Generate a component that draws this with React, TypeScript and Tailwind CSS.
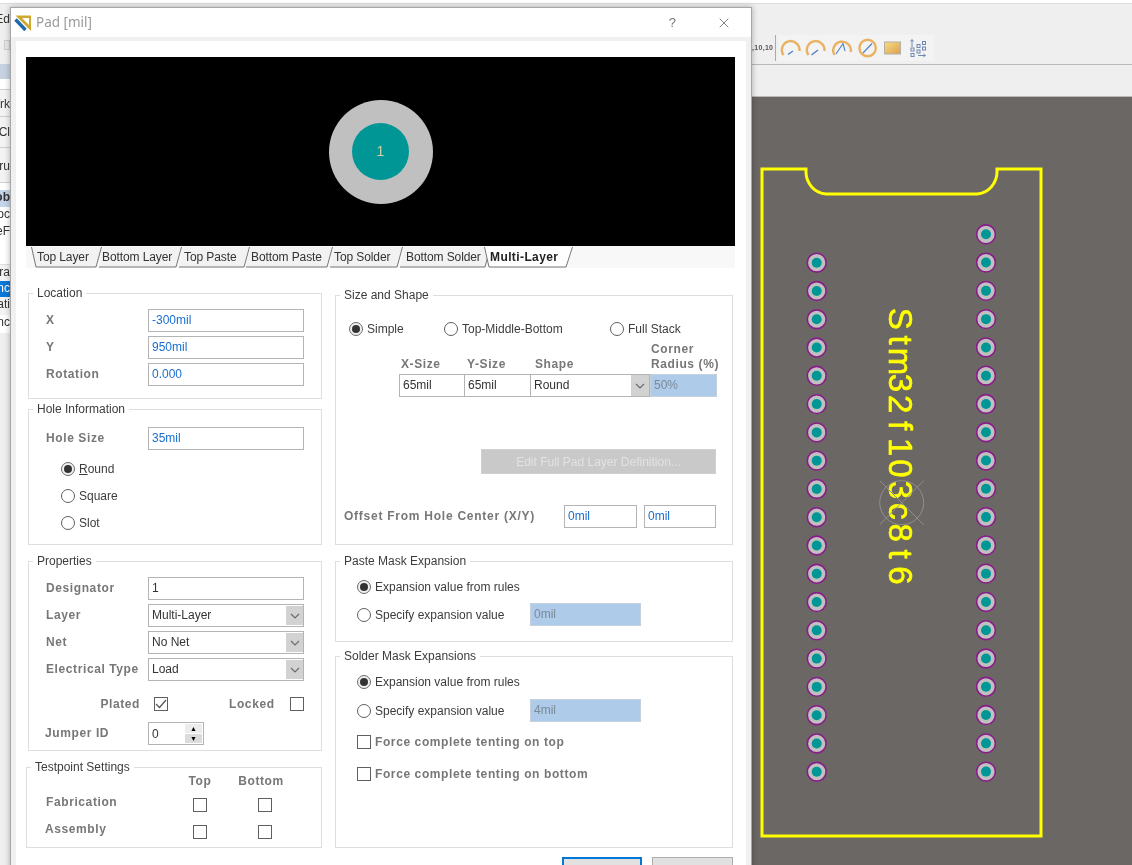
import type { ReactNode } from "react";
import { X } from "lucide-react";

const LABEL = "whitespace-nowrap text-[12px] font-bold tracking-[0.6px] text-[#777777]";
const LEFT_PADS = Array.from({ length: 19 }, (_, i) => 262.7 + i * 28.28);
const RIGHT_PADS = Array.from({ length: 20 }, (_, i) => 234.3 + i * 28.28);
const BOARD_TEXT = "Stm32f103c8t6";
const BOARD_TEXT_X = BOARD_TEXT.split("").map((_, i) => (10.7 + i * 21.4).toFixed(1)).join(" ");

const TABS = [
  { label: "Top Layer", width: 71, box: "w-[71px] pl-[6px]" },
  { label: "Bottom Layer", width: 84, box: "w-[84px] pl-[4px] -ml-[4px]" },
  { label: "Top Paste", width: 72, box: "w-[72px] pl-[6px] -ml-[4px]" },
  { label: "Bottom Paste", width: 88, box: "w-[88px] pl-[6px] -ml-[5px]" },
  { label: "Top Solder", width: 74, box: "w-[74px] pl-[5px] -ml-[4px]" },
  { label: "Bottom Solder", width: 92, box: "w-[92px] pl-[7px] -ml-[4px]" },
];

const SIDE_ROWS = [
  { text: "", box: "h-[3px] bg-white" },
  { text: "", box: "h-[9px] border-t border-[#dddddd]" },
  { text: "Ed", box: "h-[15px]" },
  { text: "", box: "h-[13px]" },
  { text: "", box: "h-[10px] ml-[4px] border border-[#cccccc] bg-[#e8e8e8]" },
  { text: "", box: "h-[14px]" },
  { text: "", box: "h-[15px] bg-[#c6d2e2]" },
  { text: "", box: "h-[11px] bg-white border-b border-[#cfcfcf]" },
  { text: "Wrk", box: "h-[27px] pt-[7px] bg-[#f3f3f3] border-b border-[#cfcfcf]" },
  { text: "Cl", box: "h-[31px] pt-[8px] bg-[#f3f3f3] border-b border-[#cfcfcf]" },
  { text: "ru", box: "h-[35px] pt-[11px] bg-[#f3f3f3] border-b border-[#cfcfcf]" },
  { text: "", box: "h-[7px] bg-white" },
  { text: "ob", box: "h-[17px] bg-[#c4d6ec] font-bold" },
  { text: "oc", box: "h-[17px] bg-white" },
  { text: "eF", box: "h-[17px] bg-white" },
  { text: "", box: "h-[24px] bg-white border-b border-[#dddddd]" },
  { text: "ora", box: "h-[16px] bg-[#f3f3f3]" },
  { text: "nc", box: "h-[16px] bg-[#0a78d7] text-white" },
  { text: "ati", box: "h-[18px] bg-[#f3f3f3]" },
  { text: "nc", box: "h-[18px] bg-white" },
];

function Group({ title, box, children }: { title: string; box: string; children: ReactNode }) {
  return (
    <div className={`relative border border-[#dedede] ${box}`}>
      <span className="absolute -top-[9px] left-[4px] whitespace-nowrap bg-white px-[4px] text-[12px] leading-[16px] text-[#3c3c3c]">
        {title}
      </span>
      {children}
    </div>
  );
}

function Field({ value, box, blue = true }: { value: string; box: string; blue?: boolean }) {
  return (
    <div
      className={`flex h-[23px] shrink-0 items-center border border-[#b4b4b4] bg-white pb-[2px] pl-[3px] text-[12px] ${box} ${
        blue ? "text-[#1a6fd0]" : "text-[#333333]"
      }`}
    >
      {value}
    </div>
  );
}

function Shaded({ value, box }: { value: string; box: string }) {
  return (
    <div className={`flex h-[23px] shrink-0 items-center border border-[#c4d0dc] bg-[#aecbe9] pb-[2px] pl-[3px] text-[12px] text-[#7b8a99] ${box}`}>
      {value}
    </div>
  );
}

function Arrow() {
  return (
    <svg width="10" height="6" viewBox="0 0 10 6" fill="none" stroke="#6a6a6a" strokeWidth="1.1">
      <path d="M1 1l4 4 4-4" />
    </svg>
  );
}

function Select({ value }: { value: string }) {
  return (
    <div className="flex h-[23px] w-[156px] shrink-0 items-center justify-between border border-[#b4b4b4] bg-white pl-[3px] text-[12px] text-[#333333]">
      <span className="pb-[2px]">{value}</span>
      <span className="flex h-[19px] w-[17px] items-center justify-center bg-[#d2d2d2]">
        <Arrow />
      </span>
    </div>
  );
}

function Radio({ label, checked = false, box = "" }: { label: string; checked?: boolean; box?: string }) {
  return (
    <div className={`flex h-[14px] shrink-0 items-center gap-[4px] whitespace-nowrap text-[12px] text-[#3c3c3c] ${box}`}>
      <span
        className={`flex h-[14px] w-[14px] shrink-0 items-center justify-center rounded-full border ${
          checked ? "border-[#6b6b6b] bg-[#f0f0f0]" : "border-[#5f5f5f] bg-white"
        }`}
      >
        {checked && <span className="h-[8px] w-[8px] rounded-full bg-[#333333]" />}
      </span>
      {label}
    </div>
  );
}

function Check({ checked = false, box = "" }: { checked?: boolean; box?: string }) {
  return (
    <span className={`flex h-[14px] w-[14px] shrink-0 items-center justify-center border border-[#5f5f5f] bg-white ${box}`}>
      {checked && (
        <svg width="12" height="10" viewBox="0 0 12 10" fill="none" stroke="#555555" strokeWidth="1.2">
          <path d="M1 5l3.5 3.5L11 1" />
        </svg>
      )}
    </span>
  );
}

function LabeledRow({ label, children, box = "" }: { label: string; children: ReactNode; box?: string }) {
  return (
    <div className={`flex h-[23px] items-center pl-[17px] ${box}`}>
      <span className={`w-[102px] shrink-0 pb-[2px] ${LABEL}`}>{label}</span>
      {children}
    </div>
  );
}

function Tab({ label, width, box, first }: { label: string; width: number; box: string; first: boolean }) {
  const fill = first ? `M0.5 1 L5 21 H${width - 6} L${width - 0.5} 1 Z` : `M5 1 L1 21 H${width - 6} L${width - 0.5} 1 Z`;
  const line = first ? `M0.5 1 L5 21 H${width - 6} L${width - 0.5} 1` : `M1 21 H${width - 6} L${width - 0.5} 1`;
  return (
    <div className={`relative flex h-[22px] shrink-0 items-center text-[12px] text-[#333333] ${box}`}>
      <svg className="absolute left-0 top-0" width={width} height="22" viewBox={`0 0 ${width} 22`} fill="none">
        <path d={fill} fill="#f2f2f2" />
        <path d={line} stroke="#777777" strokeWidth="1" />
      </svg>
      <span className="relative whitespace-nowrap tracking-[-0.1px]">{label}</span>
    </div>
  );
}

function ToolbarIcons() {
  const arc = "#e8b262";
  const needle = "#4f7fce";
  return (
    <svg width="156" height="26" viewBox="778 35 156 26" className="block bg-[#f3f3f3]" fill="none">
      <defs>
        <linearGradient id="swatch" x1="0" y1="0" x2="1" y2="1">
          <stop offset="0" stopColor="#fbdc7e" />
          <stop offset="1" stopColor="#d9a055" />
        </linearGradient>
      </defs>
      <path d="M783.5 55 A8.8 8.8 0 1 1 799.4 51" stroke={arc} strokeWidth="2.4" />
      <path d="M788 54.5 L793 51" stroke={needle} strokeWidth="1.4" />
      <path d="M808.5 55 A8.8 8.8 0 1 1 824.4 51" stroke={arc} strokeWidth="2.4" />
      <path d="M811.5 55 L818 50" stroke={needle} strokeWidth="1.4" />
      <path d="M834.5 55 A8.8 8.8 0 1 1 850.7 52" stroke={arc} strokeWidth="2.4" />
      <path d="M836 54 L843 43.5 L845 51" stroke={needle} strokeWidth="1.1" />
      <circle cx="867.6" cy="48" r="8.2" stroke={arc} strokeWidth="2.4" />
      <path d="M863 53 L872 43.5" stroke={needle} strokeWidth="1.1" />
      <rect x="884.5" y="42" width="16" height="12" fill="url(#swatch)" stroke="#b5b0a4" strokeWidth="1" />
      <g stroke="#6d88b4" strokeWidth="1">
        <path d="M912 47 V40 M910.5 41.5 L912 39.5 L913.5 41.5" />
        <path d="M918 55.5 H925 M923.5 54 L925.5 55.5 L923.5 57" />
        <rect x="911" y="48" width="3" height="3" />
        <rect x="911" y="53.5" width="3" height="3" />
        <rect x="917" y="44.5" width="3" height="3" />
        <rect x="917" y="50" width="3" height="3" />
        <rect x="922.5" y="41.5" width="3" height="3" />
        <rect x="922.5" y="47" width="3" height="3" />
      </g>
    </svg>
  );
}

function Board() {
  return (
    <svg className="block" width="1122" height="768" viewBox="10 97 1122 768" fill="none">
      <path
        d="M762 169 H806 V172 A22 22 0 0 0 826 194 H977 A22 22 0 0 0 997 172 V169 H1041 V836 H762 Z"
        stroke="#ffff00"
        strokeWidth="3"
      />
      {LEFT_PADS.map((y) => (
        <g key={y}>
          <circle cx="816.7" cy={y} r="9.4" fill="#c0c0c0" stroke="#8b1a8b" strokeWidth="1.6" />
          <circle cx="816.7" cy={y} r="5" fill="#009696" />
        </g>
      ))}
      {RIGHT_PADS.map((y) => (
        <g key={y}>
          <circle cx="986" cy={y} r="9.4" fill="#c0c0c0" stroke="#8b1a8b" strokeWidth="1.6" />
          <circle cx="986" cy={y} r="5" fill="#009696" />
        </g>
      ))}
      <text
        transform="translate(889 308) rotate(90)"
        x={BOARD_TEXT_X}
        fill="#ffff00"
        stroke="#ffff00"
        strokeWidth="0.6"
        fontFamily="'Liberation Sans', Arial, sans-serif"
        fontSize="33"
        textAnchor="middle"
      >
        {BOARD_TEXT}
      </text>
      <g stroke="#8f8f8f" strokeWidth="1">
        <circle cx="901.7" cy="502.7" r="22" />
        <path d="M879.7 480.7 L923.7 524.7 M923.7 480.7 L879.7 524.7" />
      </g>
    </svg>
  );
}

export default function App() {
  return (
    <div className="relative flex h-[865px] w-[1132px] overflow-hidden bg-[#efefef] font-['Liberation_Sans',Arial,sans-serif] blur-[0.5px]">
      {/* sliver of the side panel behind the dialog */}
      <div className="flex w-[10px] shrink-0 flex-col overflow-hidden text-[12px] leading-[15px] text-[#333333]">
        {SIDE_ROWS.map((row, i) => (
          <div key={i} className={`flex shrink-0 justify-end whitespace-nowrap ${row.box}`}>
            {row.text}
          </div>
        ))}
      </div>

      <div className="flex min-w-0 flex-1 flex-col">
        <div className="h-[3px] shrink-0 bg-white" />
        <div className="flex h-[62px] shrink-0 items-end border-y border-t-[#dddddd] border-b-[#b9b9b9] pb-[3px] pl-[742px]">
          <span className="mb-[8px] w-[23px] text-[7px] font-bold tracking-[0.3px] text-[#555555]">,10,10</span>
          <span className="h-[26px] w-px bg-[#aaaaaa]" />
          <span className="ml-[2px]">
            <ToolbarIcons />
          </span>
        </div>
        <div className="h-[32px] shrink-0 border-b border-[#b9b9b9]" />
        <div className="min-h-0 flex-1 bg-[#6b6764]">
          <Board />
        </div>
      </div>

      {/* Pad dialog */}
      <div className="absolute left-[10px] top-[7px] flex h-[870px] w-[742px] flex-col border border-[#a6a6a6] bg-[#f0f0f0] shadow-[0_0_6px_rgba(0,0,0,0.3)]">
        <div className="flex h-[29px] shrink-0 items-center bg-white pl-[3px]">
          <svg width="18" height="18" viewBox="0 0 18 18" fill="none">
            <path d="M1.5 1.5 H17 V17 Z" fill="#cfa92e" />
            <path d="M8 4 H15 V11 Z" fill="#ffffff" />
            <path d="M1.5 5.5 L11.5 16" stroke="#2268ad" strokeWidth="3.4" />
          </svg>
          <span className="ml-[4px] font-['Noto_Sans',sans-serif] text-[13.5px] text-[#9a9a9a]">Pad [mil]</span>
          <span className="ml-auto text-[13px] text-[#777777]">?</span>
          <X className="ml-[40px] mr-[19px] text-[#444444]" size={16} strokeWidth={1} />
        </div>

        <div className="mx-[5px] mt-[4px] flex-1 bg-white pl-[10px] pt-[16px]">
          <div className="flex h-[189px] w-[709px] items-center justify-center bg-black">
            <div className="flex h-[104px] w-[104px] items-center justify-center rounded-full bg-[#c0c0c0]">
              <div className="flex h-[57px] w-[57px] items-center justify-center rounded-full bg-[#009696] text-[14px] text-[#c9d3a8]">
                1
              </div>
            </div>
          </div>

          <div className="flex h-[22px] w-[709px] bg-[#f8f8f8] pl-[5px]">
            {TABS.map((tab, i) => (
              <Tab key={tab.label} {...tab} first={i === 0} />
            ))}
            <div className="relative -ml-[7px] flex h-[22px] w-[89px] shrink-0 items-center pl-[6px] text-[12px] font-bold text-[#222222]">
              <svg className="absolute left-0 top-0" width="89" height="22" viewBox="0 0 89 22">
                <path d="M0.5 1 L5 21 H82 L88.5 1" fill="#ffffff" stroke="#777777" strokeWidth="1" />
              </svg>
              <span className="relative whitespace-nowrap tracking-[0.4px]">Multi-Layer</span>
            </div>
          </div>

          <div className="mt-[25px] flex pl-[2px]">
            {/* left column */}
            <div className="w-[294px] shrink-0">
              <Group title="Location" box="h-[106px] pt-[15px]">
                <LabeledRow label="X">
                  <Field value="-300mil" box="w-[156px]" />
                </LabeledRow>
                <LabeledRow label="Y" box="mt-[4px]">
                  <Field value="950mil" box="w-[156px]" />
                </LabeledRow>
                <LabeledRow label="Rotation" box="mt-[4px]">
                  <Field value="0.000" box="w-[156px]" />
                </LabeledRow>
              </Group>

              <Group title="Hole Information" box="mt-[10px] h-[136px] pt-[17px]">
                <LabeledRow label="Hole Size">
                  <Field value="35mil" box="w-[156px]" />
                </LabeledRow>
                <div className="mt-[12px] flex flex-col gap-[13px] pl-[32px]">
                  <div className="flex h-[14px] items-center gap-[4px] text-[12px] text-[#3c3c3c]">
                    <span className="flex h-[14px] w-[14px] items-center justify-center rounded-full border border-[#6b6b6b] bg-[#f0f0f0]">
                      <span className="h-[8px] w-[8px] rounded-full bg-[#333333]" />
                    </span>
                    <span>
                      <span className="underline">R</span>ound
                    </span>
                  </div>
                  <Radio label="Square" />
                  <Radio label="Slot" />
                </div>
              </Group>

              <Group title="Properties" box="mt-[16px] h-[190px] pt-[15px]">
                <LabeledRow label="Designator">
                  <Field value="1" box="w-[156px]" blue={false} />
                </LabeledRow>
                <LabeledRow label="Layer" box="mt-[4px]">
                  <Select value="Multi-Layer" />
                </LabeledRow>
                <LabeledRow label="Net" box="mt-[4px]">
                  <Select value="No Net" />
                </LabeledRow>
                <LabeledRow label="Electrical Type" box="mt-[4px]">
                  <Select value="Load" />
                </LabeledRow>
                <div className="mt-[16px] flex h-[14px] items-center pl-[17px]">
                  <span className={`w-[94px] text-right ${LABEL}`}>Plated</span>
                  <Check checked box="ml-[14px]" />
                  <span className={`ml-[61px] w-[47px] ${LABEL}`}>Locked</span>
                  <Check box="ml-[14px]" />
                </div>
                <div className="mt-[11px] flex h-[23px] items-center pl-[16px]">
                  <span className={`w-[103px] shrink-0 pb-[2px] ${LABEL}`}>Jumper ID</span>
                  <div className="flex h-[23px] w-[56px] items-center justify-between border border-[#b4b4b4] bg-white pl-[3px] pr-[1px] text-[12px] text-[#333333]">
                    0
                    <span className="flex w-[17px] flex-col gap-[1px] text-black">
                      <span className="flex h-[9px] items-center justify-center bg-[#ececec] text-[7px] leading-none">▲</span>
                      <span className="flex h-[9px] items-center justify-center bg-[#dcdcdc] text-[7px] leading-none">▼</span>
                    </span>
                  </div>
                </div>
              </Group>

              <Group title="Testpoint Settings" box="mt-[16px] -ml-[2px] h-[81px] pt-[6px]">
                <div className="flex h-[14px] items-center pl-[166px]">
                  <span className={`flex w-[14px] justify-center ${LABEL}`}>Top</span>
                  <span className={`ml-[47px] flex w-[14px] justify-center ${LABEL}`}>Bottom</span>
                </div>
                <div className="mt-[10px] flex h-[14px] items-center pl-[19px]">
                  <span className={`w-[147px] pb-[6px] ${LABEL}`}>Fabrication</span>
                  <Check />
                  <Check box="ml-[51px]" />
                </div>
                <div className="mt-[13px] flex h-[14px] items-center pl-[18px]">
                  <span className={`w-[148px] pb-[6px] ${LABEL}`}>Assembly</span>
                  <Check />
                  <Check box="ml-[51px]" />
                </div>
              </Group>
            </div>

            {/* right column */}
            <div className="ml-[13px] mt-[2px] w-[398px] shrink-0">
              <Group title="Size and Shape" box="h-[250px] pt-[26px]">
                <div className="flex pl-[13px]">
                  <Radio label="Simple" checked box="w-[95px]" />
                  <Radio label="Top-Middle-Bottom" box="w-[166px]" />
                  <Radio label="Full Stack" />
                </div>
                <div className={`ml-[63px] mt-[6px] flex h-[30px] items-end leading-[15px] ${LABEL}`}>
                  <span className="w-[66px] pl-[2px]">X-Size</span>
                  <span className="w-[66px] pl-[2px]">Y-Size</span>
                  <span className="w-[119px] pl-[4px]">Shape</span>
                  <span className="pl-[1px]">
                    Corner
                    <br />
                    Radius (%)
                  </span>
                </div>
                <div className="ml-[63px] mt-[2px] flex h-[23px] w-[318px] text-[12px] text-[#333333]">
                  <Field value="65mil" box="w-[66px]" blue={false} />
                  <Field value="65mil" box="-ml-px w-[67px]" blue={false} />
                  <div className="-ml-px flex h-[23px] w-[120px] items-center justify-between border border-[#b4b4b4] bg-white pl-[3px]">
                    <span className="pb-[2px]">Round</span>
                    <span className="flex h-[21px] w-[18px] items-center justify-center bg-[#d2d2d2]">
                      <Arrow />
                    </span>
                  </div>
                  <Shaded value="50%" box="w-[67px]" />
                </div>
                <div className="ml-[145px] mt-[52px] flex h-[25px] w-[235px] items-center justify-center border border-[#d0d0d0] bg-[#c9c9c9] text-[12px] text-[#e2e2e2]">
                  Edit Full Pad Layer Definition...
                </div>
                <div className="ml-[8px] mt-[31px] flex h-[23px] items-center">
                  <span className={`w-[220px] shrink-0 pb-[2px] tracking-[0.75px] ${LABEL}`}>Offset From Hole Center (X/Y)</span>
                  <Field value="0mil" box="w-[73px]" />
                  <Field value="0mil" box="ml-[7px] w-[72px]" />
                </div>
              </Group>

              <Group title="Paste Mask Expansion" box="mt-[16px] h-[81px] pt-[18px]">
                <div className="pl-[21px]">
                  <Radio label="Expansion value from rules" checked />
                  <div className="mt-[9px] flex h-[23px] items-center">
                    <Radio label="Specify expansion value" box="w-[173px]" />
                    <Shaded value="0mil" box="w-[111px]" />
                  </div>
                </div>
              </Group>

              <Group title="Solder Mask Expansions" box="mt-[14px] h-[192px] pt-[18px]">
                <div className="pl-[21px]">
                  <Radio label="Expansion value from rules" checked />
                  <div className="mt-[10px] flex h-[23px] items-center">
                    <Radio label="Specify expansion value" box="w-[173px]" />
                    <Shaded value="4mil" box="w-[111px]" />
                  </div>
                  <div className="mt-[13px] flex h-[14px] items-center gap-[4px]">
                    <Check />
                    <span className={LABEL}>Force complete tenting on top</span>
                  </div>
                  <div className="mt-[18px] flex h-[14px] items-center gap-[4px]">
                    <Check />
                    <span className={LABEL}>Force complete tenting on bottom</span>
                  </div>
                </div>
              </Group>

              <div className="ml-[227px] mt-[9px] flex gap-[10px]">
                <div className="h-[40px] w-[80px] border-2 border-[#0078d7] bg-[#e1e1e1]" />
                <div className="h-[40px] w-[81px] border border-[#adadad] bg-[#e1e1e1]" />
              </div>
            </div>
          </div>
        </div>
      </div>
    </div>
  );
}
